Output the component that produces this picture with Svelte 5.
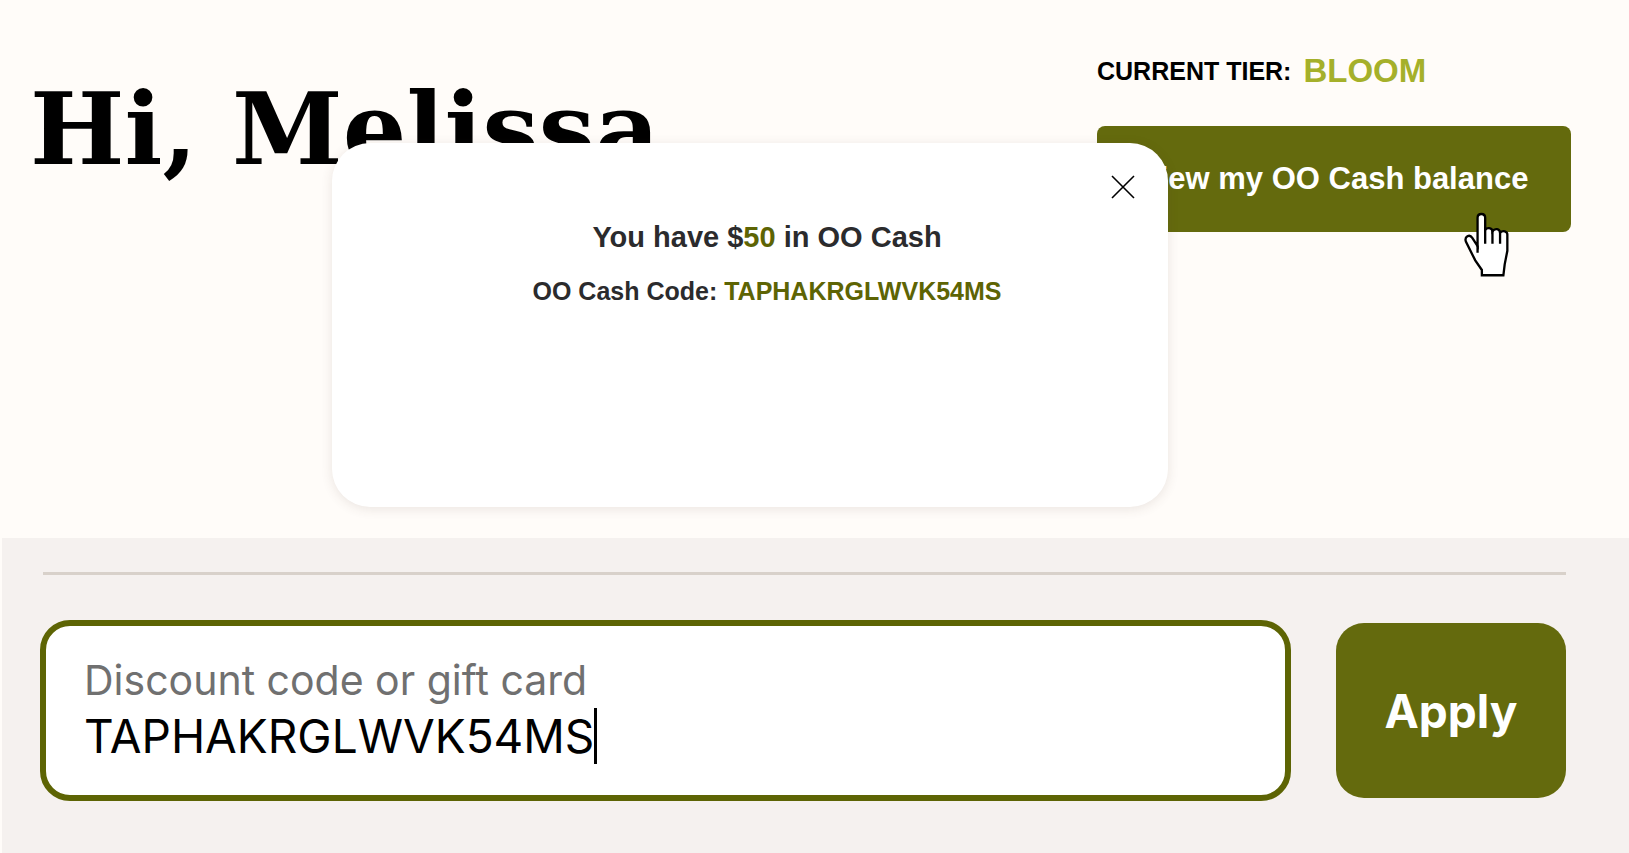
<script>
    let name = 'Melissa';
    let tier = 'BLOOM';
    let balance = 50;
    let cashCode = 'TAPHAKRGLWVK54MS';

    let modalOpen = true;
    let discountCode = cashCode;

    function OpenModal(){
        modalOpen = true;
    }

    function CloseModal(){
        modalOpen = false;
    }
</script>


<main class="rewards">
    <section class="account">
        <h1 class="account__greeting">Hi, {name}</h1>

        <div class="account__tier">
            <p class="tier">
                <span class="tier__label">CURRENT TIER:</span>
                <span class="tier__name">{tier}</span>
            </p>
            <div class="balance">
                <button type="button" class="balance__button" on:click={OpenModal}>View my OO Cash balance</button>
                <svg class="balance__pointer" viewBox="72 35 136 194" aria-hidden="true">
                    <path d="M126 225V209L106 180L78 124C72 108 89 99 97 112L113 137V51C113 36 136 36 136 51V88C141 80 157 80 158 92C165 82 180 84 181 96C190 88 203 92 203 102V151L195 192L191 225Z"/>
                    <path d="M113 135V157M136 84V130M158 90V130M181 95V130"/>
                </svg>
            </div>
        </div>

        {#if modalOpen}
        <div class="modal" role="dialog" aria-labelledby="modal-title">
            <button type="button" class="modal__close" aria-label="Close" on:click={CloseModal}>
                <svg viewBox="0 0 24 24" aria-hidden="true">
                    <path d="M1 1L23 23M23 1L1 23"/>
                </svg>
            </button>
            <h2 id="modal-title" class="modal__title">You have $<span class="modal__accent">{balance}</span> in OO Cash</h2>
            <p class="modal__code">OO Cash Code: <span class="modal__accent">{cashCode}</span></p>
        </div>
        {/if}
    </section>

    <section class="checkout">
        <form class="discount" on:submit|preventDefault>
            <div class="discount__field">
                <label class="discount__label" for="discount-code">Discount code or gift card</label>
                <div class="discount__entry">
                    <input id="discount-code" class="discount__input" type="text" autocomplete="off" spellcheck="false" bind:value={discountCode}/>
                    <span class="discount__caret"></span>
                </div>
            </div>
            <button type="submit" class="discount__apply">Apply</button>
        </form>
    </section>
</main>


<style>
    :global(body) {
        margin: 0;
        background-color: #fffcf9;
    }

    .rewards {
        --olive: #646a0d;
        --olive-dark: #5d6404;

        display: flex;
        flex-direction: column;

        min-height: 100vh;

        font-family: "Liberation Sans", Arial, sans-serif;
        color: #000;
    }

    button {
        border: none;
        cursor: pointer;
    }

    .account {
        position: relative;

        display: flex;
        justify-content: space-between;
        align-items: flex-start;

        box-sizing: border-box;
        min-height: 538px;
        padding: 52px 58px 0 30px;
    }

    .account__greeting {
        margin: 21px 0 0;

        font-family: "DejaVu Serif", serif;
        font-size: 100px;
        font-weight: bold;
        line-height: 112px;
        white-space: nowrap;
    }

    .account__tier {
        width: 474px;
    }

    .tier {
        display: flex;
        align-items: center;
        gap: 12px;

        margin: 0 0 36px;

        font-weight: bold;
        line-height: 38px;
    }

    .tier__label {
        font-size: 25px;
    }

    .tier__name {
        font-size: 33px;
        color: #a5b02a;
    }

    .balance {
        position: relative;
    }

    .balance__button {
        display: block;

        width: 100%;
        height: 106px;
        border-radius: 8px;

        font-family: inherit;
        font-size: 31px;
        font-weight: bold;
        color: #fff;
        white-space: nowrap;

        background-color: var(--olive);
    }

    .balance__pointer {
        position: absolute;
        top: 86px;
        right: 62px;

        width: 45px;
        height: 65px;

        fill: #fff;
        stroke: #000;
        stroke-width: 7;

        pointer-events: none;
    }

    .modal {
        position: absolute;
        top: 143px;
        right: 461px;
        left: 332px;

        box-sizing: border-box;
        min-height: 364px;
        padding: 76px 0 0 34px;
        border-radius: 38px;

        font-weight: bold;
        text-align: center;
        color: #2b2b2d;

        background-color: #fff;
        box-shadow: 0 2px 12px rgba(80, 60, 50, 0.12);
    }

    .modal__close {
        position: absolute;
        top: 32px;
        right: 33px;

        width: 24px;
        height: 24px;
        padding: 0;

        background: none;
    }

    .modal__close svg {
        display: block;

        stroke: #000;
        stroke-width: 1.6;
    }

    .modal__title {
        margin: 0 0 18px;

        font-size: 29px;
        line-height: 36px;
    }

    .modal__code {
        margin: 0;

        font-size: 25px;
        line-height: 36px;
    }

    .modal__accent {
        color: var(--olive-dark);
    }

    .checkout {
        flex-grow: 1;

        margin-left: 2px;
        padding: 34px 63px 51px 38px;

        font-family: Inter, sans-serif;

        background-color: #f5f1ef;
    }

    .checkout::before {
        content: "";

        display: block;

        height: 3px;
        margin: 0 0 45px 3px;

        background-color: #d8d1ca;
    }

    .discount {
        display: flex;
        align-items: center;
        gap: 45px;
    }

    .discount__field {
        flex-grow: 1;

        box-sizing: border-box;
        height: 181px;
        padding: 28px 38px 0;
        border: 6px solid var(--olive-dark);
        border-radius: 30px;

        background-color: #fff;
    }

    .discount__label {
        display: block;

        font-size: 41px;
        line-height: 52px;
        color: #707070;
    }

    .discount__entry {
        display: flex;
        align-items: center;
    }

    .discount__input {
        field-sizing: content;

        padding: 0;
        border: none;
        outline: none;

        font-family: inherit;
        font-size: 46px;
        line-height: 60px;
        color: #000;

        background: none;
    }

    .discount__caret {
        width: 3px;
        height: 56px;

        background-color: #000;
    }

    .discount__apply {
        width: 230px;
        height: 175px;
        border-radius: 28px;

        font-family: inherit;
        font-size: 46px;
        font-weight: bold;
        color: #fff;

        background-color: var(--olive);
    }
</style>
